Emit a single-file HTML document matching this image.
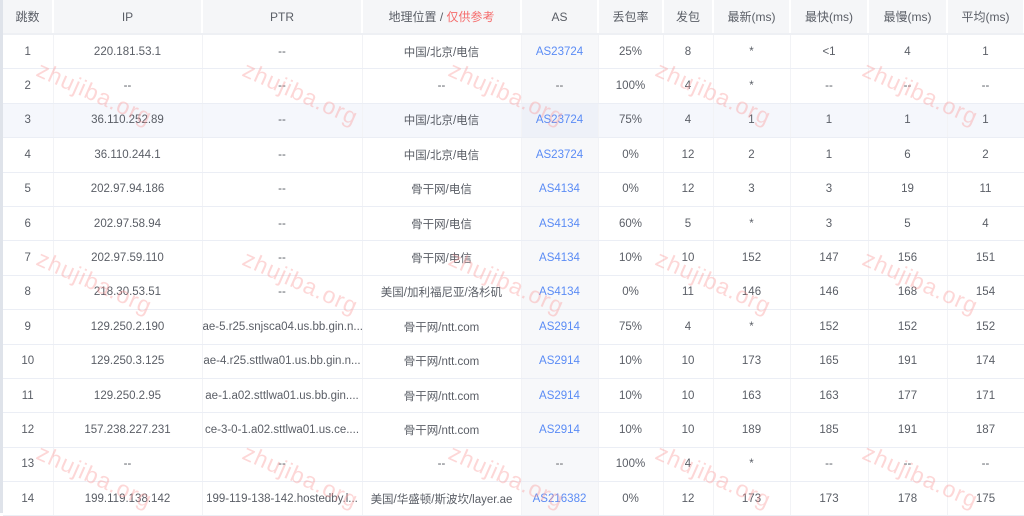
<!DOCTYPE html>
<html><head><meta charset="utf-8"><style>
body{margin:0;width:1024px;height:513px;overflow:hidden;background:#fff;font-family:"Liberation Sans","Noto Sans CJK SC",sans-serif;position:relative}
.strip{position:absolute;left:0;top:0;width:3px;height:513px;background:#dfe3ea}
table{position:absolute;left:3px;top:0;border-collapse:collapse;table-layout:fixed;width:1021px}
td,th{text-align:center;font-size:11.5px;color:#5a5e66;padding:0;white-space:nowrap;overflow:hidden;text-overflow:clip;border-bottom:1px solid #ebeef5;border-right:1px solid #f2f3f6}
th{height:33px;background:#f5f6f8;font-weight:normal;border-right:2px solid #fff;border-bottom:2px solid #eef0f4;font-size:12px}
td{height:33.4px}
td.as{background:#f7f8fa;color:#5b8cf5}
tr.hl td{background:#f5f7fc}
tr.hl td.as{background:#eef1f8}
.red{color:#f56c6c}
.wm{position:absolute;font-size:23px;color:rgba(250,150,150,0.38);transform:rotate(24deg);transform-origin:left center;letter-spacing:1px;white-space:nowrap;pointer-events:none}
</style></head><body>
<div class="strip"></div>
<table>
<colgroup><col style="width:50px"><col style="width:149px"><col style="width:160px"><col style="width:159px"><col style="width:77px"><col style="width:65px"><col style="width:50px"><col style="width:77px"><col style="width:78px"><col style="width:79px"><col style="width:77px"></colgroup>
<tr><th>跳数</th><th>IP</th><th>PTR</th><th>地理位置 / <span class="red">仅供参考</span></th><th>AS</th><th>丢包率</th><th>发包</th><th>最新(ms)</th><th>最快(ms)</th><th>最慢(ms)</th><th>平均(ms)</th></tr>
<tr><td>1</td><td>220.181.53.1</td><td>--</td><td>中国/北京/电信</td><td class="as">AS23724</td><td>25%</td><td>8</td><td>*</td><td>&lt;1</td><td>4</td><td>1</td></tr>
<tr><td>2</td><td>--</td><td>--</td><td>--</td><td class="as" style="color:#606266">--</td><td>100%</td><td>4</td><td>*</td><td>--</td><td>--</td><td>--</td></tr>
<tr class="hl"><td>3</td><td>36.110.252.89</td><td>--</td><td>中国/北京/电信</td><td class="as">AS23724</td><td>75%</td><td>4</td><td>1</td><td>1</td><td>1</td><td>1</td></tr>
<tr><td>4</td><td>36.110.244.1</td><td>--</td><td>中国/北京/电信</td><td class="as">AS23724</td><td>0%</td><td>12</td><td>2</td><td>1</td><td>6</td><td>2</td></tr>
<tr><td>5</td><td>202.97.94.186</td><td>--</td><td>骨干网/电信</td><td class="as">AS4134</td><td>0%</td><td>12</td><td>3</td><td>3</td><td>19</td><td>11</td></tr>
<tr><td>6</td><td>202.97.58.94</td><td>--</td><td>骨干网/电信</td><td class="as">AS4134</td><td>60%</td><td>5</td><td>*</td><td>3</td><td>5</td><td>4</td></tr>
<tr><td>7</td><td>202.97.59.110</td><td>--</td><td>骨干网/电信</td><td class="as">AS4134</td><td>10%</td><td>10</td><td>152</td><td>147</td><td>156</td><td>151</td></tr>
<tr><td>8</td><td>218.30.53.51</td><td>--</td><td>美国/加利福尼亚/洛杉矶</td><td class="as">AS4134</td><td>0%</td><td>11</td><td>146</td><td>146</td><td>168</td><td>154</td></tr>
<tr><td>9</td><td>129.250.2.190</td><td>ae-5.r25.snjsca04.us.bb.gin.n...</td><td>骨干网/ntt.com</td><td class="as">AS2914</td><td>75%</td><td>4</td><td>*</td><td>152</td><td>152</td><td>152</td></tr>
<tr><td>10</td><td>129.250.3.125</td><td>ae-4.r25.sttlwa01.us.bb.gin.n...</td><td>骨干网/ntt.com</td><td class="as">AS2914</td><td>10%</td><td>10</td><td>173</td><td>165</td><td>191</td><td>174</td></tr>
<tr><td>11</td><td>129.250.2.95</td><td>ae-1.a02.sttlwa01.us.bb.gin....</td><td>骨干网/ntt.com</td><td class="as">AS2914</td><td>10%</td><td>10</td><td>163</td><td>163</td><td>177</td><td>171</td></tr>
<tr><td>12</td><td>157.238.227.231</td><td>ce-3-0-1.a02.sttlwa01.us.ce....</td><td>骨干网/ntt.com</td><td class="as">AS2914</td><td>10%</td><td>10</td><td>189</td><td>185</td><td>191</td><td>187</td></tr>
<tr><td>13</td><td>--</td><td>--</td><td>--</td><td class="as" style="color:#606266">--</td><td>100%</td><td>4</td><td>*</td><td>--</td><td>--</td><td>--</td></tr>
<tr><td>14</td><td>199.119.138.142</td><td>199-119-138-142.hostedby.l...</td><td>美国/华盛顿/斯波坎/layer.ae</td><td class="as">AS216382</td><td>0%</td><td>12</td><td>173</td><td>173</td><td>178</td><td>175</td></tr>
</table>
<div class="wm" style="left:38px;top:55px">zhujiba.org</div>
<div class="wm" style="left:244px;top:55px">zhujiba.org</div>
<div class="wm" style="left:450px;top:55px">zhujiba.org</div>
<div class="wm" style="left:657px;top:55px">zhujiba.org</div>
<div class="wm" style="left:864px;top:55px">zhujiba.org</div>
<div class="wm" style="left:38px;top:244px">zhujiba.org</div>
<div class="wm" style="left:244px;top:244px">zhujiba.org</div>
<div class="wm" style="left:450px;top:244px">zhujiba.org</div>
<div class="wm" style="left:657px;top:244px">zhujiba.org</div>
<div class="wm" style="left:864px;top:244px">zhujiba.org</div>
<div class="wm" style="left:38px;top:438px">zhujiba.org</div>
<div class="wm" style="left:244px;top:438px">zhujiba.org</div>
<div class="wm" style="left:450px;top:438px">zhujiba.org</div>
<div class="wm" style="left:657px;top:438px">zhujiba.org</div>
<div class="wm" style="left:864px;top:438px">zhujiba.org</div>
</body></html>
